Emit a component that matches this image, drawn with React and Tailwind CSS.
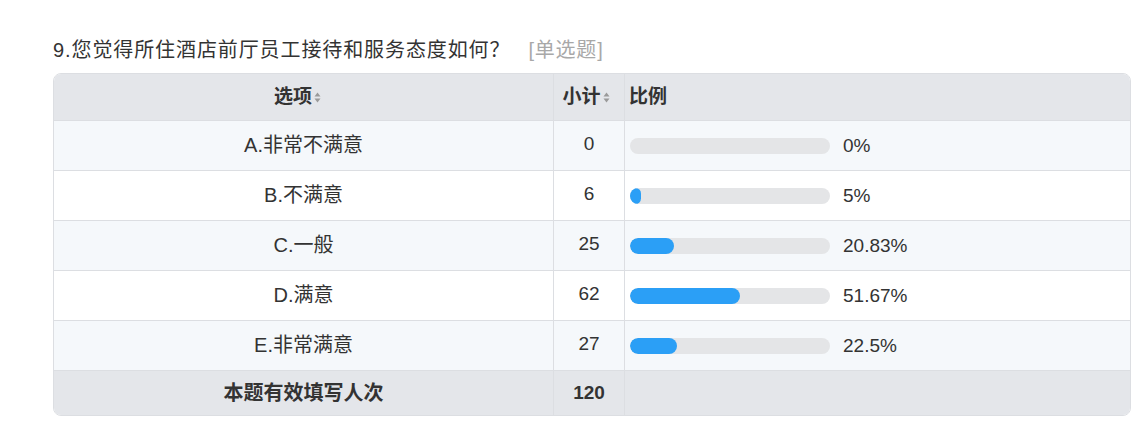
import React from "react"

const rows = [
    { label: "A.非常不满意", count: 0, pct: "0%", fill: 0 },
    { label: "B.不满意", count: 6, pct: "5%", fill: 11 },
    { label: "C.一般", count: 25, pct: "20.83%", fill: 44 },
    { label: "D.满意", count: 62, pct: "51.67%", fill: 110 },
    { label: "E.非常满意", count: 27, pct: "22.5%", fill: 47 },
]

function SortIcon() {
    return (
        <svg width="7" height="11" viewBox="0 0 7 11" className="inline-block ml-[2px] align-[-1px]">
            <path d="M3.5 0.5 L6.5 4.5 L0.5 4.5 Z" fill="#9a9a9a" />
            <path d="M3.5 10.5 L6.5 6.5 L0.5 6.5 Z" fill="#9a9a9a" />
        </svg>
    )
}

export default function App() {
    return (
        <div
            className="bg-white min-h-[428px] pl-[53px] pt-[37px] text-[#333]"
            style={{ fontFamily: '"Liberation Sans", "Noto Sans CJK SC", sans-serif' }}
        >
            <div className="text-[20px] leading-[26px] flex items-center">
                <span className="tracking-[0.9px]">9.您觉得所住酒店前厅员工接待和服务态度如何？</span>
                <span className="ml-[18px] text-[#a8a8a8] tracking-[0.8px]">[单选题]</span>
            </div>

            <div className="mt-[10px] w-[1078px] border border-[#dcdee2] rounded-[8px] overflow-hidden text-[19px]">
                {/* header */}
                <div className="flex h-[47px] bg-[#e4e6ea] border-b border-[#dcdee2] font-bold text-[19px]">
                    <div className="w-[500px] border-r border-[#dcdee2] flex items-center justify-center pr-[12px]">
                        <span>选项</span>
                        <SortIcon />
                    </div>
                    <div className="w-[71px] border-r border-[#dcdee2] flex items-center justify-center pr-[6px]">
                        <span>小计</span>
                        <SortIcon />
                    </div>
                    <div className="flex-1 flex items-center pl-[4px]">比例</div>
                </div>

                {rows.map((row, i) => (
                    <div
                        key={row.label}
                        className={`flex h-[50px] border-b border-[#dcdee2] ${i % 2 === 0 ? "bg-[#f5f8fb]" : "bg-white"}`}
                    >
                        <div className="w-[500px] border-r border-[#dcdee2] flex items-center justify-center pb-[1px] text-[20px]">
                            {row.label}
                        </div>
                        <div className="w-[71px] border-r border-[#dcdee2] flex items-center justify-center pb-[2px]">
                            {row.count}
                        </div>
                        <div className="flex-1 flex items-center pl-[5px]">
                            <div className="w-[200px] h-[16px] rounded-full bg-[#e4e5e7] overflow-hidden">
                                <div className="h-full rounded-full bg-[#2b9ff6]" style={{ width: row.fill }} />
                            </div>
                            <span className="ml-[13px] pt-[2px]">{row.pct}</span>
                        </div>
                    </div>
                ))}

                {/* footer */}
                <div className="flex h-[44px] bg-[#e4e6ea] font-bold">
                    <div className="w-[500px] border-r border-[#dcdee2] flex items-center justify-center text-[20px]">
                        本题有效填写人次
                    </div>
                    <div className="w-[71px] border-r border-[#dcdee2] flex items-center justify-center">
                        120
                    </div>
                    <div className="flex-1" />
                </div>
            </div>
        </div>
    )
}
